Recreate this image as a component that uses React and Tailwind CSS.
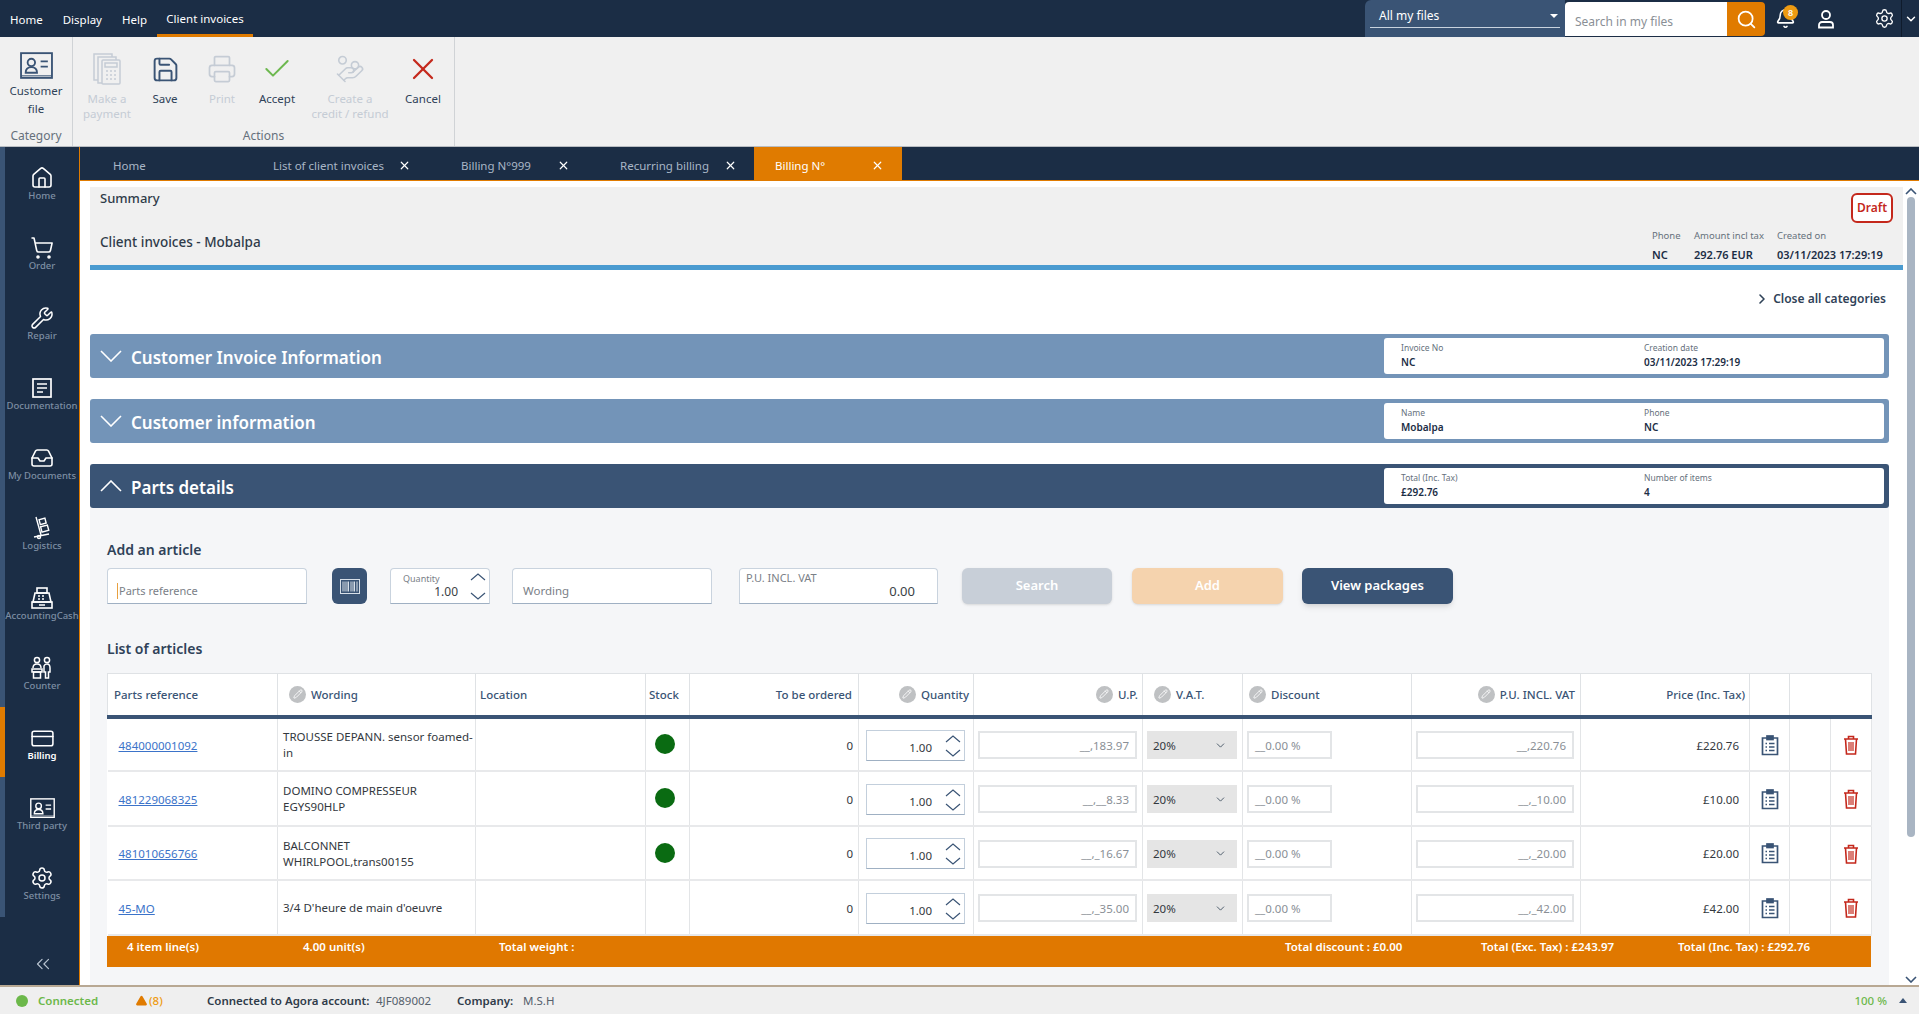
import React from 'react';
import { House, ShoppingCart, Wrench, Inbox, CreditCard, Settings, ChevronsLeft, ChevronDown, ChevronRight, Save, Printer, Check, X, HandCoins, Search, Bell, Pencil, Triangle } from 'lucide-react';

// flat chevron, lucide's are too narrow for this app
function Chev({ up, w = 16, h = 8, width = 1.2, className }) {
    const pts = up ? `1,${h - 1} ${w / 2},1 ${w - 1},${h - 1}` : `1,1 ${w / 2},${h - 1} ${w - 1},1`;
    return (
        <svg width={w} height={h} viewBox={`0 0 ${w} ${h}`} fill="none" stroke="currentColor" strokeWidth={width} className={className}>
            <polyline points={pts} />
        </svg>
    );
}

function ContactCard({ size = 30, className }) {
    return (
        <svg width={size} height={size * 0.82} viewBox="0 0 32 26" fill="none" stroke="currentColor" strokeWidth="1.8" className={className}>
            <rect x="1" y="1" width="30" height="24" />
            <circle cx="11" cy="10" r="3.6" />
            <path d="M5.5 20c0-3.5 2-5.5 5.5-5.5s5.5 2 5.5 5.5z" />
            <path d="M20 9h7M20 14h7" />
            <path d="M1 23h30" strokeWidth="1" />
        </svg>
    );
}

function DocLines({ size = 24 }) {
    return (
        <svg width={size} height={size} viewBox="0 0 24 24" fill="none" stroke="currentColor" strokeWidth="1.7">
            <rect x="3" y="3" width="18" height="18" />
            <path d="M7 8h10M7 12h10M7 16h6" />
        </svg>
    );
}

function Dolly({ size = 24 }) {
    return (
        <svg width={size} height={size} viewBox="0 0 24 24" fill="none" stroke="currentColor" strokeWidth="1.4">
            <path d="M6 1l5 18M4 21l15-3" />
            <circle cx="9" cy="21" r="1.5" />
            <rect x="9.5" y="3" width="6" height="5" transform="rotate(-15 12 5)" />
            <rect x="11" y="10" width="7" height="5.5" transform="rotate(-15 14 12)" />
        </svg>
    );
}

function CashRegister({ size = 24 }) {
    return (
        <svg width={size} height={size} viewBox="0 0 24 24" fill="none" stroke="currentColor" strokeWidth="1.6">
            <rect x="7" y="2" width="10" height="5" />
            <path d="M5 7h14l2 9H3z" />
            <rect x="2" y="16" width="20" height="6" />
            <path d="M8 10h2M12 10h2M8 13h2M12 13h2M9 19h6" />
        </svg>
    );
}

function CounterPeople({ size = 24 }) {
    return (
        <svg width={size} height={size} viewBox="0 0 24 24" fill="none" stroke="currentColor" strokeWidth="1.5">
            <circle cx="7" cy="4" r="2.6" />
            <circle cx="17" cy="4" r="2.6" />
            <path d="M3 12c0-3 1.500-4 4-4s4 1 4 4M14 10c.5-1.500 1.500-2 3-2s3 1 3 4v4h-1.500v6h-3v-6H14z" />
            <rect x="2" y="13" width="10" height="3" />
            <rect x="3.500" y="16" width="7" height="6" />
        </svg>
    );
}

function Calculator({ size = 32 }) {
    return (
        <svg width={size} height={size} viewBox="0 0 28 32" fill="none" stroke="currentColor" strokeWidth="1.500">
            <path d="M5 27H1V1h18v3" />
            <path d="M9 30H5V4h18v3" />
            <rect x="9" y="7" width="18" height="24" rx="1" />
            <rect x="12" y="10" width="12" height="4" />
            <path d="M13 18h2M17 18h2M21 18h2M13 22h2M17 22h2M21 22h2M13 26h2M17 26h2M21 26h2" />
        </svg>
    );
}

function Barcode() {
    return (
        <svg width="20" height="15" viewBox="0 0 20 15" fill="none" stroke="#d7dfe8">
            <rect x="0.5" y="0.5" width="19" height="14" />
            <path d="M3 2.500v10M5 2.500v10M7 2.500v10M8.500 2.500v10M11 2.500v10M13 2.500v10M14.500 2.500v10M17 2.500v10" />
        </svg>
    );
}

function UserBadge() {
    return (
        <svg width="18" height="20" viewBox="0 0 18 20" fill="none" stroke="currentColor" strokeWidth="1.8">
            <circle cx="9" cy="6" r="4" />
            <path d="M2 18.500v-2.500c0-1.700 1.300-3 3-3h8c1.700 0 3 1.300 3 3v2.500z" />
        </svg>
    );
}

function ClipboardLines() {
    return (
        <svg width="18" height="21" viewBox="0 0 18 21" fill="none" stroke="#3a5475" strokeWidth="1.7" className="mx-auto">
            <path d="M6 3H1.500v16.500h15V3H12" />
            <rect x="6" y="1" width="6" height="3.500" fill="#3a5475" />
            <path d="M4.500 8.500h1.500M8 8.500h5.500M4.500 12h1.500M8 12h5.500M4.500 15.500h1.500M8 15.500h5.500" strokeWidth="1.400" />
        </svg>
    );
}

function TrashBin() {
    return (
        <svg width="16" height="20" viewBox="0 0 16 20" fill="none" stroke="#c4281c" strokeWidth="1.600" className="mx-auto">
            <path d="M1 4h14M5.500 4V1.500h5V4" />
            <path d="M2.500 4l1 15h9l1-15" />
            <path d="M6 7v9M8 7v9M10 7v9" strokeWidth="1.200" />
        </svg>
    );
}

const sideItems = [
    { label: 'Home', icon: <House size={24} strokeWidth={1.6} /> },
    { label: 'Order', icon: <ShoppingCart size={24} strokeWidth={1.6} /> },
    { label: 'Repair', icon: <Wrench size={24} strokeWidth={1.5} /> },
    { label: 'Documentation', icon: <DocLines /> },
    { label: 'My Documents', icon: <Inbox size={24} strokeWidth={1.6} /> },
    { label: 'Logistics', icon: <Dolly /> },
    { label: 'AccountingCash', icon: <CashRegister /> },
    { label: 'Counter', icon: <CounterPeople /> },
    { label: 'Billing', icon: <CreditCard size={25} strokeWidth={1.5} />, active: true },
    { label: 'Third party', icon: <ContactCard size={25} /> },
    { label: 'Settings', icon: <Settings size={24} strokeWidth={1.5} /> },
];

const rows = [
    { ref: '484000001092', wording: ['TROUSSE DEPANN. sensor foamed-', 'in'], stock: true, up: '__,183.97', pu: '__,220.76', price: '£220.76' },
    { ref: '481229068325', wording: ['DOMINO COMPRESSEUR', 'EGYS90HLP'], stock: true, up: '__,__8.33', pu: '__,_10.00', price: '£10.00' },
    { ref: '481010656766', wording: ['BALCONNET', 'WHIRLPOOL,trans00155'], stock: true, up: '__,_16.67', pu: '__,_20.00', price: '£20.00' },
    { ref: '45-MO', wording: ["3/4 D'heure de main d'oeuvre"], stock: false, up: '__,_35.00', pu: '__,_42.00', price: '£42.00' },
];

function RibbonItem({ width, icon, lines, disabled }) {
    return (
        <div className={`flex flex-col items-center ${width} ${disabled ? 'text-[#c5ccd5]' : 'text-[#2f4258]'}`}>
            <div className="h-[44px] flex items-center justify-center mt-[10px]">{icon}</div>
            {lines.map(l => (
                <div key={l} className="text-[11.5px] leading-[15px] whitespace-nowrap">{l}</div>
            ))}
        </div>
    );
}

function TopBar() {
    return (
        <div className="h-[37px] bg-[#1b2d45] flex text-white text-[11.5px] relative">
            <div className="flex items-center pl-[10px] pt-[2px] gap-[20px]">
                <span>Home</span>
                <span>Display</span>
                <span>Help</span>
            </div>
            <div className="ml-[10px] w-[96px] border-b-[3px] border-[#e07b00] flex items-center justify-center pt-[4px]">Client invoices</div>
            <div className="ml-auto flex items-start">
                <div className="w-[200px] h-[37px] bg-[#3a5475] rounded-tl-md px-[5px] pt-[4px]">
                    <div className="h-[24px] border-b border-[#c9d3de] flex items-center justify-between pl-[9px] pr-[2px] text-[12px]">
                        <span>All my files</span>
                        <span className="w-0 h-0 border-x-[4px] border-x-transparent border-t-[4px] border-t-white"></span>
                    </div>
                </div>
                <div className="w-[162px] h-[34px] mt-[2px] bg-white rounded-tl flex items-center pl-[10px] pt-[6px] text-[#8a8f96] text-[12px]">Search in my files</div>
                <div className="w-[38px] h-[34px] mt-[2px] bg-[#e07b00] rounded-r flex items-center justify-center">
                    <Search size={21} strokeWidth={2} />
                </div>
                <div className="w-[40px] h-[37px] flex items-center justify-center relative">
                    <Bell size={21} strokeWidth={1.8} />
                    <span className="absolute left-[18px] top-[5px] w-[15px] h-[15px] rounded-full bg-[#ee9b12] text-[9px] font-semibold flex items-center justify-center">8</span>
                </div>
                <div className="w-[42px] h-[37px] flex items-center justify-center">
                    <UserBadge />
                </div>
                <div className="w-[54px] h-[37px] flex items-center justify-end pr-[6px]">
                    <Settings size={21} strokeWidth={1.5} />
                </div>
                <div className="w-[18px] h-[37px] border-l border-[#0f1b2c] flex items-center justify-center">
                    <ChevronDown size={14} strokeWidth={2.5} />
                </div>
            </div>
        </div>
    );
}

function Ribbon() {
    return (
        <div className="h-[110px] bg-[#f0f0f0] flex border-b border-[#b9bdc2]">
            <div className="w-[73px] border-r border-[#d0d3d6] flex flex-col items-center text-[#2f4258]">
                <div className="mt-[15px] text-[#3a5475]"><ContactCard size={33} /></div>
                <div className="mt-[3px] text-[11.5px] leading-[18px] text-center">Customer<br />file</div>
                <div className="mt-auto mb-[1px] text-[12px] text-[#66707c]">Category</div>
            </div>
            <div className="w-[382px] border-r border-[#d0d3d6] flex flex-col">
                <div className="flex flex-1">
                    <RibbonItem width="w-[68px]" disabled lines={['Make a', 'payment']} icon={<Calculator />} />
                    <RibbonItem width="w-[48px]" lines={['Save']} icon={<span className="text-[#3a5475]"><Save size={29} strokeWidth={1.6} /></span>} />
                    <RibbonItem width="w-[66px]" disabled lines={['Print']} icon={<Printer size={30} strokeWidth={1.4} />} />
                    <RibbonItem width="w-[44px]" lines={['Accept']} icon={<span className="text-[#6db84f]"><Check size={32} strokeWidth={1.5} /></span>} />
                    <RibbonItem width="w-[102px]" disabled lines={['Create a', 'credit / refund']} icon={<HandCoins size={30} strokeWidth={1.3} />} />
                    <RibbonItem width="w-[44px]" lines={['Cancel']} icon={<span className="text-[#c4281c]"><X size={36} strokeWidth={1.5} /></span>} />
                </div>
                <div className="text-center text-[12px] text-[#66707c] mb-[1px]">Actions</div>
            </div>
        </div>
    );
}

function Sidebar() {
    return (
        <div className="w-[80px] shrink-0 bg-[#1b2d45] flex flex-col border-r border-[#e07b00]">
            {sideItems.map(it => (
                <div key={it.label} className={`h-[70px] border-l-[5px] flex flex-col items-center pt-[19px] ${it.active ? 'border-[#e07b00]' : 'border-[#3a5475]'}`}>
                    <div className="h-[24px] flex items-center text-white">{it.icon}</div>
                    <div className={`text-[9.5px] leading-[14px] mt-[-1px] whitespace-nowrap ${it.active ? 'text-white font-semibold' : 'text-[#7d8ea3] font-medium'}`}>{it.label}</div>
                </div>
            ))}
            <div className="flex-1 flex items-center justify-center text-[#b8c3d0] pt-[26px] pl-[6px]">
                <ChevronsLeft size={22} strokeWidth={1.3} />
            </div>
        </div>
    );
}

function Tab({ label, width, pl, pr, active, closable = true }) {
    return (
        <div className={`h-[33px] flex items-center justify-between text-[11.5px] pt-[4px] ${width} ${pl} ${pr} ${active ? 'bg-[#e07b00] text-white' : 'text-[#a9b6c6]'}`}>
            <span>{label}</span>
            {closable && <X size={13} strokeWidth={2.2} className="text-white" />}
        </div>
    );
}

function SectionBar({ title, open, labelA, valueA, labelB, valueB }) {
    return (
        <div className={`h-[44px] rounded-[3px] flex items-center pl-[10px] pr-[5px] text-white ${open ? 'bg-[#3a5475]' : 'bg-[#7394b8]'}`}>
            <Chev up={open} w={22} h={12} width={1.6} />
            <div className="ml-[9px] pt-[3px] text-[17px] font-semibold">{title}</div>
            <div className="ml-auto w-[500px] h-[36px] bg-white rounded-[3px] flex pl-[17px] pt-[1px] text-[#1b2d45]">
                <div className="w-[243px] pt-[3px]">
                    <div className="text-[8.5px] leading-[12px] text-[#66707c]">{labelA}</div>
                    <div className="text-[10px] leading-[15px] font-semibold mt-[1px]">{valueA}</div>
                </div>
                <div className="pt-[3px]">
                    <div className="text-[8.5px] leading-[12px] text-[#66707c]">{labelB}</div>
                    <div className="text-[10px] leading-[15px] font-semibold mt-[1px]">{valueB}</div>
                </div>
            </div>
        </div>
    );
}

function FieldBox({ width, children, className = '' }) {
    return (
        <div className={`h-[36px] bg-white border border-[#c9d3de] border-b-[#9fb0c3] rounded-t-[4px] ${width} ${className}`}>{children}</div>
    );
}

function AddArticle() {
    return (
        <div className="flex items-start">
            <FieldBox width="w-[200px]" className="flex items-center pl-[9px] pt-[10px] text-[11px] text-[#7a8087]">
                <span className="border-l border-[#e8a040] pl-[1px]">Parts reference</span>
            </FieldBox>
            <div className="ml-[25px] w-[35px] h-[36px] rounded-md bg-[#3a5475] flex items-center justify-center"><Barcode /></div>
            <FieldBox width="w-[100px]" className="ml-[23px] relative">
                <div className="absolute left-[12px] top-[3px] text-[9px] text-[#7a8087]">Quantity</div>
                <div className="absolute right-[31px] top-[14px] text-[12px] text-[#3a3f45]">1.00</div>
                <Chev up className="absolute right-[3px] top-[4px] text-[#3a5475]" />
                <Chev className="absolute right-[3px] bottom-[3px] text-[#3a5475]" />
            </FieldBox>
            <FieldBox width="w-[200px]" className="ml-[22px] flex items-center pl-[10px] pt-[10px] text-[11.5px] text-[#7a8087]">Wording</FieldBox>
            <FieldBox width="w-[199px]" className="ml-[27px] relative">
                <div className="absolute left-[6px] top-[1px] text-[11px] text-[#7a8087]">P.U. INCL. VAT</div>
                <div className="absolute right-[22px] top-[13px] text-[13px] text-[#3a3f45]">0.00</div>
            </FieldBox>
            <button className="ml-[24px] w-[150px] h-[36px] rounded-md bg-[#c8cfd8] text-white text-[13px] font-semibold shadow-sm">Search</button>
            <button className="ml-[20px] w-[151px] h-[36px] rounded-md bg-[#f5d3ae] text-white text-[13px] font-semibold shadow-sm">Add</button>
            <button className="ml-[19px] w-[151px] h-[36px] rounded-md bg-[#3a5475] text-white text-[13px] font-semibold shadow-md">View packages</button>
        </div>
    );
}

function PencilBadge() {
    return (
        <span className="w-[17px] h-[17px] rounded-full bg-[#bfc1c3] inline-flex items-center justify-center shrink-0">
            <Pencil size={10} strokeWidth={2} className="text-white" />
        </span>
    );
}

function HeadCell({ children, edit, right, className = '' }) {
    return (
        <th className={`border-r border-[#dfe2e5] font-medium text-[11.5px] text-[#3a5475] px-[6px] ${className}`}>
            <div className={`flex items-center gap-[5px] whitespace-nowrap ${right ? 'justify-end' : ''}`}>
                {edit && <PencilBadge />}
                <span>{children}</span>
            </div>
        </th>
    );
}

function TextBox({ width, children }) {
    return (
        <div className={`h-[28px] border-2 border-[#e3e5e7] bg-white flex items-center justify-end text-[11.5px] text-[#8a8f96] ${width}`}>{children}</div>
    );
}

function ArticleRow({ row }) {
    return (
        <tr className="h-[54.5px] border-b-2 border-[#e8e9eb] text-[11.5px] text-[#33383e]">
            <td className="border-r border-[#e3e5e7] pl-[11px] pt-[2px]"><a className="text-[#3b73c9] underline">{row.ref}</a></td>
            <td className="border-r border-[#e3e5e7] pl-[5px] pr-[2px] pt-[2px] leading-[16px]">
                {row.wording.map(w => <div key={w} className="whitespace-nowrap">{w}</div>)}
            </td>
            <td className="border-r border-[#e3e5e7]"></td>
            <td className="border-r border-[#e3e5e7] pr-[6px]">
                {row.stock && <div className="w-[20px] h-[20px] rounded-full bg-[#0a6b12] mx-auto"></div>}
            </td>
            <td className="border-r border-[#e3e5e7] text-right pr-[5px] pt-[2px]">0</td>
            <td className="border-r border-[#e3e5e7] px-[7px] pt-[2px]">
                <div className="w-[99px] h-[31px] border border-[#c3cfdc] border-b-[#9fb0c3] bg-white relative">
                    <span className="absolute right-[32px] top-[8px] text-[#33383e]">1.00</span>
                    <Chev up className="absolute right-[3px] top-[4px] text-[#3a5475]" />
                    <Chev className="absolute right-[3px] bottom-[3px] text-[#3a5475]" />
                </div>
            </td>
            <td className="border-r border-[#e3e5e7] px-[4px] pt-[2px]"><TextBox width="w-[159px]"><span className="pr-[6px]">{row.up}</span></TextBox></td>
            <td className="border-r border-[#e3e5e7] px-[4px] pt-[2px]">
                <div className="h-[28px] w-[90px] bg-[#e5e5e5] flex items-center justify-between pl-[6px] pr-[10px] text-[#33383e]">
                    <span>20%</span>
                    <ChevronDown size={13} strokeWidth={1.6} className="text-[#3a4a5c]" />
                </div>
            </td>
            <td className="border-r border-[#e3e5e7] px-[4px] pt-[2px]"><TextBox width="w-[85px] !justify-start"><span className="pl-[6px]">__0.00 %</span></TextBox></td>
            <td className="border-r border-[#e3e5e7] px-[4px] pt-[2px]"><TextBox width="w-[158px]"><span className="pr-[6px]">{row.pu}</span></TextBox></td>
            <td className="border-r border-[#e3e5e7] text-right pr-[10px] pt-[2px]">{row.price}</td>
            <td className="border-r border-[#e3e5e7] pt-[2px]"><ClipboardLines /></td>
            <td className="border-r border-[#e3e5e7]"></td>
            <td className="border-r border-[#e3e5e7] pt-[2px]"><TrashBin /></td>
        </tr>
    );
}

function ArticleTable() {
    const widths = ['w-[170px]', 'w-[198px]', 'w-[170px]', 'w-[44px]', 'w-[169px]', 'w-[115px]', 'w-[169px]', 'w-[100px]', 'w-[169px]', 'w-[169px]', 'w-[169px]', 'w-[40px]', 'w-[41px]', 'w-[41px]'];
    return (
        <table className="w-[1764px] table-fixed border-collapse bg-white">
            <colgroup>
                {widths.map((w, i) => <col key={i} className={w} />)}
            </colgroup>
            <thead>
                <tr className="h-[43px] border-t border-[#dfe2e5] border-b-[4px] border-b-[#3a5475] border-l border-l-[#dfe2e5]">
                    <HeadCell>Parts reference</HeadCell>
                    <HeadCell edit className="!pl-[11px]">Wording</HeadCell>
                    <HeadCell className="!pl-[4px]">Location</HeadCell>
                    <HeadCell className="!pl-[3px] !pr-0">Stock</HeadCell>
                    <HeadCell right>To be ordered</HeadCell>
                    <HeadCell edit right className="!pr-[4px]">Quantity</HeadCell>
                    <HeadCell edit right className="!pr-[4px]">U.P.</HeadCell>
                    <HeadCell edit className="!pl-[11px]">V.A.T.</HeadCell>
                    <HeadCell edit>Discount</HeadCell>
                    <HeadCell edit right className="!pr-[5px]">P.U. INCL. VAT</HeadCell>
                    <HeadCell right className="!pr-[4px]">Price (Inc. Tax)</HeadCell>
                    <HeadCell></HeadCell>
                    <th></th>
                    <th className="border-r border-[#dfe2e5]"></th>
                </tr>
            </thead>
            <tbody>
                {rows.map(r => <ArticleRow key={r.ref} row={r} />)}
            </tbody>
        </table>
    );
}

function TotalsBar() {
    return (
        <div className="w-[1764px] h-[31px] bg-[#e07800] flex text-white text-[11.5px] font-semibold pl-[20px] pt-[2px]">
            <div className="w-[176px]">4 item line(s)</div>
            <div className="w-[196px]">4.00 unit(s)</div>
            <div className="w-[786px]">Total weight :</div>
            <div className="w-[196px]">Total discount : £0.00</div>
            <div className="w-[197px]">Total (Exc. Tax) : £243.97</div>
            <div>Total (Inc. Tax) : £292.76</div>
        </div>
    );
}

function SummaryStat({ label, value, width }) {
    return (
        <div className={width}>
            <div className="text-[9.5px] leading-[14px] text-[#66707c] whitespace-nowrap">{label}</div>
            <div className="text-[11px] leading-[16px] font-semibold mt-[4px] text-[#1b2d45] whitespace-nowrap">{value}</div>
        </div>
    );
}

function Summary() {
    return (
        <div className="h-[83px] shrink-0 bg-[#f0f0f0] border-b-[5px] border-[#4a9bd0] flex justify-between pl-[10px] pr-[10px] text-[#2f3b49]">
            <div className="flex flex-col">
                <div className="text-[13px] font-medium mt-[2px]">Summary</div>
                <div className="text-[13.5px] font-medium mt-[23px]">Client invoices - Mobalpa</div>
            </div>
            <div className="flex flex-col items-end">
                <div className="mt-[6px] w-[42px] h-[30px] rounded-md border-2 border-[#c4281c] bg-white text-[#c4281c] text-[12px] font-semibold flex items-center justify-center">Draft</div>
                <div className="flex mt-[6px] pr-[10px]">
                    <SummaryStat width="w-[42px]" label="Phone" value="NC" />
                    <SummaryStat width="w-[83px]" label="Amount incl tax" value="292.76 EUR" />
                    <SummaryStat width="w-[106px]" label="Created on" value="03/11/2023 17:29:19" />
                </div>
            </div>
        </div>
    );
}

function Scrollbar() {
    return (
        <div className="w-[16px] shrink-0 flex flex-col items-center bg-white">
            <Chev up w={12} h={7} width={1.6} className="text-[#3a5475] mt-[1px]" />
            <div className="w-[8px] h-[640px] rounded bg-[#a9b5c3] mt-[2px]"></div>
            <Chev w={12} h={7} width={1.6} className="text-[#3a5475] mt-auto mb-[2px]" />
        </div>
    );
}

function StatusBar() {
    return (
        <div className="h-[29px] bg-[#efefef] border-t-2 border-[#b8a893] flex items-center text-[11.5px] text-[#2f3b49]">
            <span className="ml-[16px] w-[12px] h-[12px] rounded-full bg-[#6cb84a]"></span>
            <span className="ml-[10px] w-[97px] text-[#6cb84a] font-semibold">Connected</span>
            <Triangle size={13} fill="#e07b00" strokeWidth={0} />
            <span className="ml-[1px] w-[58px] text-[#ee9b12] font-medium">(8)</span>
            <span className="font-semibold w-[169px]">Connected to Agora account:</span>
            <span className="w-[81px] text-[#55606c]">4JF089002</span>
            <span className="font-semibold w-[66px]">Company:</span>
            <span className="text-[#55606c]">M.S.H</span>
            <span className="ml-auto text-[#6cb84a] font-medium">100 %</span>
            <span className="ml-[12px] mr-[12px] w-0 h-0 border-x-[4px] border-x-transparent border-b-[5px] border-b-[#3a5475]"></span>
        </div>
    );
}

export default function App() {
    return (
        <div className="w-[1919px] h-[1014px] overflow-hidden flex flex-col bg-white font-['Noto_Sans',sans-serif]">
            <TopBar />
            <Ribbon />
            <div className="flex-1 min-h-0 flex">
                <Sidebar />
                <div className="flex-1 min-w-0 flex flex-col">
                    <div className="h-[33px] shrink-0 bg-[#1b2d45] flex">
                        <Tab label="Home" width="w-[173px]" pl="pl-[33px]" closable={false} />
                        <Tab label="List of client invoices" width="w-[188px]" pl="pl-[20px]" pr="pr-[30px]" />
                        <Tab label="Billing N°999" width="w-[159px]" pl="pl-[20px]" pr="pr-[30px]" />
                        <Tab label="Recurring billing" width="w-[154px]" pl="pl-[20px]" pr="pr-[17px]" />
                        <Tab label="Billing N°" width="w-[148px]" pl="pl-[21px]" pr="pr-[18px]" active />
                    </div>
                    <div className="flex-1 min-h-0 flex border-t border-[#e07b00] pt-[6px]">
                        <div className="flex-1 min-w-0 pl-[10px] flex flex-col">
                            <Summary />
                            <div className="h-[64px] shrink-0 flex items-center justify-end pr-[17px] pb-[6px] text-[12px] font-semibold text-[#2f4258]">
                                <ChevronRight size={16} strokeWidth={2.4} />
                                <span className="ml-[3px]">Close all categories</span>
                            </div>
                            <div className="pr-[14px] flex flex-col gap-[21px]">
                                <SectionBar title="Customer Invoice Information" labelA="Invoice No" valueA="NC" labelB="Creation date" valueB="03/11/2023 17:29:19" />
                                <SectionBar title="Customer information" labelA="Name" valueA="Mobalpa" labelB="Phone" valueB="NC" />
                            </div>
                            <div className="mt-[21px] mr-[14px] flex-1 flex flex-col bg-[#f5f6f8]">
                                <SectionBar open title="Parts details" labelA="Total (Inc. Tax)" valueA="£292.76" labelB="Number of items" valueB="4" />
                                <div className="pl-[17px]">
                                    <div className="mt-[32px] h-[20px] text-[14px] font-semibold text-[#2f4258] leading-[20px]">Add an article</div>
                                    <div className="mt-[8px]"><AddArticle /></div>
                                    <div className="mt-[35px] h-[20px] text-[14px] font-semibold text-[#2f4258] leading-[20px]">List of articles</div>
                                    <div className="mt-[14px]"><ArticleTable /></div>
                                    <TotalsBar />
                                </div>
                            </div>
                        </div>
                        <Scrollbar />
                    </div>
                </div>
            </div>
            <StatusBar />
        </div>
    );
}
